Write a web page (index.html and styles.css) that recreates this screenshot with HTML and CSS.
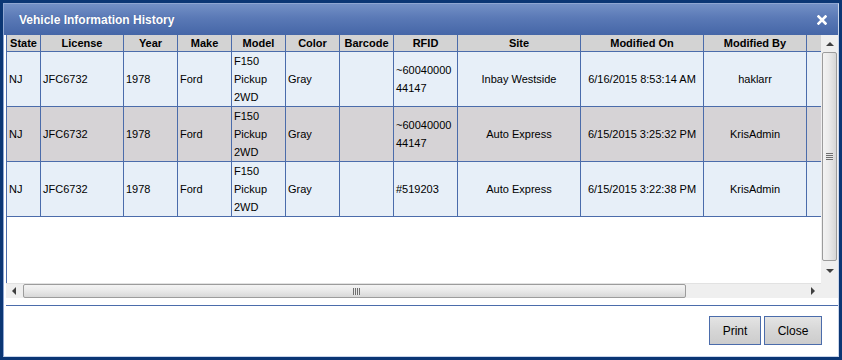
FILE: index.html
```html
<!DOCTYPE html>
<html lang="en">
<head>
    <meta charset="UTF-8">
    <meta name="viewport" content="width=device-width, initial-scale=1.0">
    <link rel="stylesheet" href="styles.css">
</head>
<body>

<!-- History Dialog -->
<div class="dialog">
    <div class="titlebar">
        <span class="title">Vehicle Information History</span>
        <span class="close-x">
            <svg width="10" height="10" viewBox="0 0 10 10"><path d="M1.5 1.5 L8.5 8.5 M8.5 1.5 L1.5 8.5" stroke="#fff" stroke-width="2.6" stroke-linecap="square"/></svg>
        </span>
    </div>

    <div class="content">
        <div class="grid">
            <div class="viewport">
                <table class="history">
                    <thead>
                        <tr>
                            <th class="c-state">State</th>
                            <th class="c-license">License</th>
                            <th class="c-std">Year</th>
                            <th class="c-std">Make</th>
                            <th class="c-std">Model</th>
                            <th class="c-std">Color</th>
                            <th class="c-std">Barcode</th>
                            <th class="c-rfid">RFID</th>
                            <th class="c-wide">Site</th>
                            <th class="c-wide">Modified On</th>
                            <th class="c-by">Modified By</th>
                            <th class="c-fill"></th>
                        </tr>
                    </thead>
                    <tbody>
                        <tr>
                            <td>NJ</td>
                            <td>JFC6732</td>
                            <td>1978</td>
                            <td>Ford</td>
                            <td>F150 Pickup 2WD</td>
                            <td>Gray</td>
                            <td></td>
                            <td class="rfid">~6004000044147</td>
                            <td class="mid">Inbay Westside</td>
                            <td class="mid">6/16/2015 8:53:14 AM</td>
                            <td class="mid">haklarr</td>
                            <td></td>
                        </tr>
                        <tr class="selected">
                            <td>NJ</td>
                            <td>JFC6732</td>
                            <td>1978</td>
                            <td>Ford</td>
                            <td>F150 Pickup 2WD</td>
                            <td>Gray</td>
                            <td></td>
                            <td class="rfid">~6004000044147</td>
                            <td class="mid">Auto Express</td>
                            <td class="mid">6/15/2015 3:25:32 PM</td>
                            <td class="mid">KrisAdmin</td>
                            <td></td>
                        </tr>
                        <tr>
                            <td>NJ</td>
                            <td>JFC6732</td>
                            <td>1978</td>
                            <td>Ford</td>
                            <td>F150 Pickup 2WD</td>
                            <td>Gray</td>
                            <td></td>
                            <td class="rfid">#519203</td>
                            <td class="mid">Auto Express</td>
                            <td class="mid">6/15/2015 3:22:38 PM</td>
                            <td class="mid">KrisAdmin</td>
                            <td></td>
                        </tr>
                    </tbody>
                </table>
            </div>

            <!-- vertical scrollbar -->
            <div class="vscroll">
                <div class="arrow-btn"><span class="tri tri-up"></span></div>
                <div class="vthumb"><span class="vgrip"></span></div>
                <div class="arrow-btn arrow-end"><span class="tri tri-down"></span></div>
            </div>

            <!-- horizontal scrollbar -->
            <div class="hscroll">
                <div class="arrow-btn h"><span class="tri tri-left"></span></div>
                <div class="hthumb"><span class="hgrip"></span></div>
                <div class="arrow-btn h arrow-end"><span class="tri tri-right"></span></div>
            </div>
            <div class="corner"></div>
        </div>

        <div class="separator"></div>

        <div class="buttons">
            <button class="btn btn-print">Print</button>
            <button class="btn btn-close">Close</button>
        </div>
    </div>
</div>

</body>
</html>
```

FILE: styles.css
```css
body {
    margin: 0;
    padding: 0;
    background-color: #0b3674;
    font-family: "Liberation Sans", Arial, sans-serif;
    height: 360px;
    overflow: hidden;
}

.dialog {
    margin: 3px 0 0 3px;
    width: 834px;
    height: 352px;
    border: 1px solid #8fa6d2;
    border-right-color: #c9d5ea;
    border-bottom-color: #c9d5ea;
    background-color: #ffffff;
    display: flex;
    flex-direction: column;
}

.titlebar {
    height: 31px;
    flex: 0 0 31px;
    background: linear-gradient(to bottom, #7390c6 0%, #5a79b6 45%, #4566a7 100%);
    display: flex;
    align-items: center;
    justify-content: space-between;
    padding: 0 11px 0 15px;
    box-sizing: border-box;
}

.title {
    color: #ffffff;
    font-weight: bold;
    font-size: 12px;
    margin-top: 1px;
    text-shadow: 0 0 1px rgba(30, 50, 100, 0.4);
}

.close-x {
    display: flex;
    width: 10px;
    height: 10px;
    margin-top: 1px;
}

.content {
    flex: 1;
    padding-left: 2px;
    display: flex;
    flex-direction: column;
}

/* grid + fake scrollbars */
.grid {
    display: grid;
    grid-template-columns: 815px 17px;
    grid-template-rows: 248px 15px;
}

.viewport {
    border-left: 1px solid #4b6cab;
    overflow: hidden;
    background-color: #ffffff;
}

.history {
    border-collapse: separate;
    border-spacing: 0;
    table-layout: fixed;
    width: 814px;
    font-size: 11px;
    color: #000000;
}

.history th,
.history td {
    box-sizing: border-box;
    border-right: 1px solid #4b6cab;
    border-bottom: 1px solid #4b6cab;
    padding: 0 2px;
    overflow: hidden;
}

.history th {
    height: 17px;
    line-height: 16px;
    background-color: #d3d3d3;
    font-weight: bold;
    text-align: center;
    white-space: nowrap;
}

.history td {
    height: 55px;
    line-height: 18px;
    text-align: left;
    vertical-align: middle;
    background-color: #e7eff8;
}

.history tr.selected td {
    background-color: #d6d3d6;
}

.history td.mid {
    text-align: center;
}

.history td.rfid {
    word-break: break-all;
    padding-right: 5px;
}

.history .c-fill,
.history td:last-child {
    border-right: none;
}

.c-state { width: 34px; }
.c-license { width: 83px; }
.c-std { width: 54px; }
.c-rfid { width: 64px; }
.c-wide { width: 123px; }
.c-by { width: 103px; }
.c-fill { width: 14px; }

.vscroll {
    background-color: #efefef;
    display: flex;
    flex-direction: column;
}

.arrow-btn {
    flex: 0 0 17px;
    display: flex;
    align-items: center;
    justify-content: center;
}

.arrow-btn.arrow-end {
    flex: 0 0 20px;
}

.arrow-btn.h {
    flex: 0 0 17px;
}

.vthumb {
    flex: 0 0 209px;
    margin: 0 1px;
    border: 1px solid #9c9c9c;
    border-radius: 2px;
    box-sizing: border-box;
    background: linear-gradient(to right, #f3f3f3 0%, #ececec 40%, #d6d6d6 100%);
    display: flex;
    align-items: center;
    justify-content: center;
}

.vgrip {
    width: 7px;
    height: 7px;
    background: repeating-linear-gradient(to bottom, #6f6f6f 0, #6f6f6f 1px, #e8e8e8 1px, #e8e8e8 2px);
}

.hscroll {
    background-color: #efefef;
    border-top: 1px solid #e2e2e2;
    display: flex;
    align-items: stretch;
}

.hscroll .arrow-btn.h {
    flex: 0 0 16px;
}

.hthumb {
    flex: 0 0 663px;
    margin-left: 1px;
    border: 1px solid #9c9c9c;
    border-radius: 2px;
    box-sizing: border-box;
    background: linear-gradient(to bottom, #f4f4f4 0%, #eaeaea 45%, #d8d8d8 100%);
    display: flex;
    align-items: center;
    justify-content: center;
}

.hgrip {
    width: 7px;
    height: 7px;
    margin-left: 3px;
    background: repeating-linear-gradient(to right, #6f6f6f 0, #6f6f6f 1px, #e8e8e8 1px, #e8e8e8 2px);
}

.hscroll .arrow-end {
    margin-left: auto;
}

.corner {
    background-color: #efefef;
}

.tri {
    width: 0;
    height: 0;
    display: block;
}

.tri-up {
    border-left: 4px solid transparent;
    border-right: 4px solid transparent;
    border-bottom: 4px solid #404040;
}

.tri-down {
    border-left: 4px solid transparent;
    border-right: 4px solid transparent;
    border-top: 4px solid #404040;
}

.tri-left {
    border-top: 4px solid transparent;
    border-bottom: 4px solid transparent;
    border-right: 4px solid #404040;
}

.tri-right {
    border-top: 4px solid transparent;
    border-bottom: 4px solid transparent;
    border-left: 4px solid #404040;
}

.separator {
    margin-top: 7px;
    height: 1px;
    background-color: #4b6cab;
}

.buttons {
    display: flex;
    justify-content: flex-end;
    gap: 3px;
    padding: 10px 16px 0 0;
}

.btn {
    height: 29px;
    font-family: "Liberation Sans", Arial, sans-serif;
    font-size: 12px;
    color: #000000;
    border: 1px solid #4b6cab;
    border-radius: 0;
    background: linear-gradient(to bottom, #e4e4e4 0%, #d6d6d6 50%, #cccccc 100%);
    padding: 0;
    cursor: pointer;
}

.btn-print { width: 52px; }
.btn-close { width: 58px; }
```
